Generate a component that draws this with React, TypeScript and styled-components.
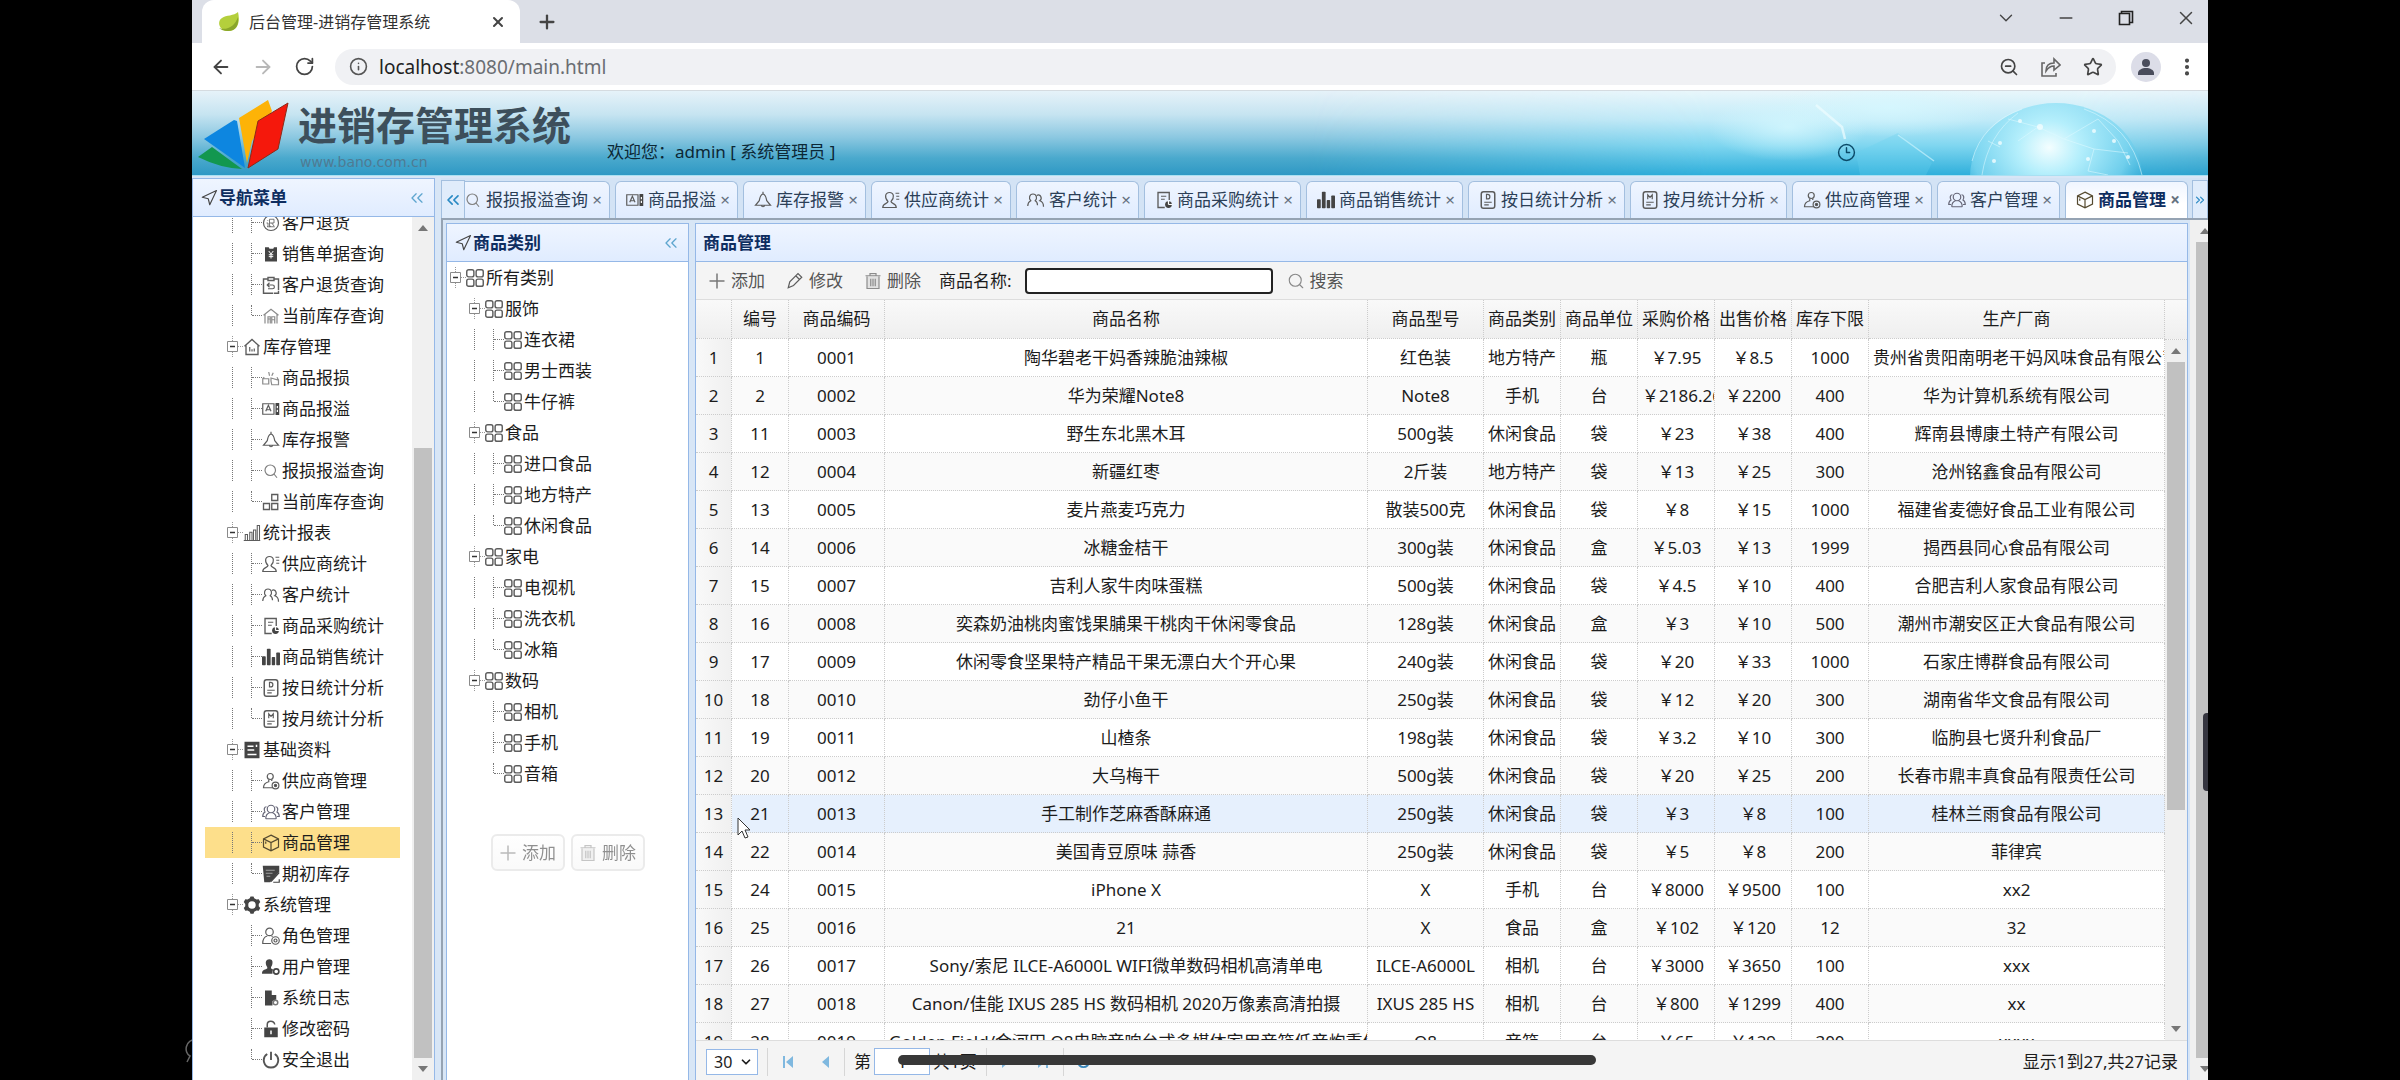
import React from "react";
import styled, { createGlobalStyle, css } from "styled-components";
import {
  ArrowLeft,
  ArrowRight,
  ChevronDown,
  ChevronsLeft,
  ChevronsRight,
  Clock3,
  Info,
  Minus,
  MoreVertical,
  Navigation,
  Plus,
  RotateCw,
  Search,
  Star,
  X,
  ZoomOut,
} from "lucide-react";

const BORDER = "#95b8e7";
const PANEL_TEXT = "#0e2d5f";
const EDGE = "#95a3b3";

const GlobalStyle = createGlobalStyle`
  * { box-sizing: border-box; }
  body {
    margin: 0;
    background: #000;
    color: #1c1c1c;
    font-family: "Noto Sans", "Noto Sans CJK SC", sans-serif;
    font-size: 17px;
    line-height: 24px;
  }
  button, input, select { font: inherit; color: inherit; }
  a { color: inherit; text-decoration: none; }
`;

/* ---------- icons ---------- */

type IconName =
  | "refund" | "receipt" | "clipboard" | "houseLight" | "house" | "damage" | "overflow"
  | "bell" | "search" | "squares" | "chart" | "supplier" | "people" | "docPie" | "bars"
  | "day" | "month" | "archive" | "supplierCog" | "group" | "cube" | "docPen" | "gear"
  | "role" | "userCog" | "log" | "lock" | "power" | "grid" | "plus" | "pencil" | "trash";

const S = { fill: "none", stroke: "#5c5c5c", strokeWidth: 1.6 } as const;
const F = { fill: "#444" } as const;

const drawings: Record<IconName, React.ReactNode> = {
  refund: (
    <g {...S}>
      <circle cx="12" cy="12" r="10" />
      <path d="M10 7h6v5h-6zM10 12v5l2-1M13 12l3 4M7 8l1 1M6 12h2v4l-1 1h10" strokeWidth="1.1" />
    </g>
  ),
  receipt: (
    <g>
      <path {...F} d="M4 3h5l1 2h5l1-2h4v19H4z" />
      <path d="M9 8l3 4 3-4M12 12v6M9 13h6M9 15.500h6" fill="none" stroke="#fff" strokeWidth="1.3" />
    </g>
  ),
  clipboard: (
    <g {...S}>
      <path d="M8 4H2v19h13M16 4h6v15M8 2h8v4H8zM16 23h6v-3" strokeWidth="1.9" />
      <path d="M10 9l-3 3 3 3M7 12h7a2.500 2.500 0 0 1 0 5h-6" />
    </g>
  ),
  houseLight: (
    <g {...S} stroke="#8a8a8a">
      <path d="M2 11L12 3l10 8M4 10v12M20 10v12" />
      <path d="M8 22v-9h3v9M13 22v-9h4v9M8 16h3M13 17h4" />
    </g>
  ),
  house: (
    <g {...S}>
      <path d="M2 11L12 2l10 9M4 10v12h16V10" strokeWidth="1.8" />
      <path d="M9 18v-6M12 18v-3M15 18v-4" />
    </g>
  ),
  damage: (
    <g {...S} stroke="#8a8a8a">
      <path d="M1 13h8v7H1zM12 12l10 3v6h-9l-1-5zM9 4l1 5M15 5l-2 4M1 13l2-2M22 15l-2-4" />
    </g>
  ),
  overflow: (
    <g {...S}>
      <path d="M1 5h15v14H1z" />
      <path d="M5 15l3.500-8 3.500 8M6 13h5" />
      <path {...F} stroke="none" d="M18 4h5v16h-5z" />
      <path d="M20.500 8v3M20.500 13v3" stroke="#fff" />
    </g>
  ),
  bell: (
    <g {...S}>
      <path d="M12 1v3M12 4c-4 1-4 5-5 9L2 19h20l-5-6c-1-4-1-8-5-9zM10 19a2 2 0 0 0 4 0" />
    </g>
  ),
  search: (
    <g {...S} stroke="#808080">
      <circle cx="11" cy="11" r="7" />
      <path d="M16 16l4 5" />
    </g>
  ),
  squares: (
    <g {...S} strokeWidth="1.8">
      <path d="M13 2h8v8h-8zM2 14h8v8H2zM13 14h8v8h-8z" />
    </g>
  ),
  chart: (
    <g {...S} strokeWidth="1.4">
      <path d="M1 22h22M3 22v-8h3v8M9 22V11h3v11M14 22V8h3v14M19 22V2h3v20" />
    </g>
  ),
  supplier: (
    <g {...S}>
      <path d="M8 14C3 9 4 2 10 2s7 7 2 12c0 3 7 2 7 8H1c0-6 7-5 7-8z" />
      <path d="M18 3h5M19 7h4M19 11h4" />
    </g>
  ),
  people: (
    <g {...S}>
      <path d="M1 20c0-5 2-6 4-7-3-3-2-9 3-9s6 6 3 9c2 1 3 2 3 6" />
      <path d="M13 6c5-3 8 4 4 7 4 1 5 4 5 8" />
    </g>
  ),
  docPie: (
    <g {...S}>
      <path d="M13 22H4V2h15v10" strokeWidth="1.8" />
      <path d="M8 7h7M8 11h5" />
      <circle {...F} stroke="none" cx="18" cy="18" r="4.500" />
      <path d="M18 18v-5M18 18h5" stroke="#fff" />
    </g>
  ),
  bars: (
    <g {...F}>
      <rect x="0" y="11" width="5" height="12" rx="1" />
      <rect x="6.500" y="1" width="5" height="22" rx="1" />
      <rect x="13" y="12" width="4.500" height="11" rx="1" />
      <rect x="19" y="6" width="5" height="17" rx="1" />
    </g>
  ),
  day: (
    <g {...S}>
      <rect x="3" y="1" width="18" height="22" rx="3" strokeWidth="2" />
      <path d="M10 4.500v6h1.500a3 3 0 0 0 0-6zM7 15h10M7 18.500h6" />
    </g>
  ),
  month: (
    <g {...S}>
      <rect x="3" y="1" width="18" height="22" rx="3" strokeWidth="2" />
      <path d="M9 11V5l3 3.500L15 5v6M7 15h10M7 18.500h6" />
    </g>
  ),
  archive: (
    <g>
      <path {...F} d="M2 1h20v22H2z" />
      <path d="M6 7h8M6 12h9M6 18h12M18 5v3" stroke="#fff" strokeWidth="2" />
    </g>
  ),
  supplierCog: (
    <g {...S}>
      <circle cx="11" cy="6" r="4" />
      <path d="M9 10v3c-4 1-7 3-7 8h12M13 10v2" />
      <circle cx="18" cy="18" r="4.500" />
      <circle cx="18" cy="18" r="1.500" fill="#444" />
    </g>
  ),
  group: (
    <g {...S} stroke="#667">
      <circle cx="12" cy="8" r="5" />
      <path d="M5 21c0-5 2-7 5-8M19 21c0-5-2-7-5-8M5 21h14M6 5C3 5 2 9 4 12c-2 1-3 3-3 6h3M18 5c3 0 4 4 2 7 2 1 3 3 3 6h-3" />
    </g>
  ),
  cube: (
    <g {...S} stroke="#554a30">
      <path d="M12 1.500l10 5v11l-10 5-10-5v-11zM2 6.500l10 5 10-5M12 11.500v11M5 10v3" />
    </g>
  ),
  docPen: (
    <g>
      <path {...F} d="M1 1h22v8L11 23H3z" />
      <path d="M5 7h12M5 11h9M6 15h5" stroke="#aaa" strokeWidth="1.200" />
      <path d="M12 22L23 10M15 23h8v-4" fill="none" stroke="#444" strokeWidth="1.600" />
    </g>
  ),
  gear: (
    <path
      {...F}
      fillRule="evenodd"
      d="M9 3l1-2.500h4L15 3l3 1.700 3-.5 2 3.800-2 2.500v3l2 2.500-2 3.800-3-.5-3 1.700-1 2.500h-4L9 21l-3-1.700-3 .5L1 16l2-2.500v-3L1 8l2-3.800 3 .5zM12 7a5 5 0 1 0 0 10 5 5 0 0 0 0-10z"
    />
  ),
  role: (
    <g {...S}>
      <circle cx="10" cy="6.500" r="5" />
      <path d="M7 12c-4 1-6 4-6 10h11M13 12l1 1" />
      <circle cx="18" cy="18" r="5" />
      <circle cx="18" cy="18" r="2" />
    </g>
  ),
  userCog: (
    <g>
      <path {...F} d="M5 6c0-6 10-6 9 0 0 3-1 5-2 6v2c3 1 3 1 2 4v3H0c0-5 3-5 7-7v-2C6 11 5 9 5 6z" />
      <circle cx="19" cy="18" r="3.500" fill="none" stroke="#444" strokeWidth="2.200" />
    </g>
  ),
  log: (
    <g>
      <path {...F} d="M4 2h9v6h6v6l-5 2v6H4z" />
      <circle cx="18" cy="18" r="3" fill="none" stroke="#777" strokeWidth="2" />
    </g>
  ),
  lock: (
    <g>
      <path {...F} fillRule="evenodd" d="M3 10h18v13H3zM11 14v5h2v-5z" />
      <path d="M7 10V6c0-6 9-6 10 0" fill="none" stroke="#555" strokeWidth="2" />
    </g>
  ),
  power: (
    <path d="M7 4C-1 9 2 22 12 22S25 9 17 4M12 1v11" fill="none" stroke="#555" strokeWidth="2.500" />
  ),
  grid: (
    <g {...S} strokeWidth="1.900">
      <rect x="1" y="1" width="9.500" height="9.500" rx="2.500" />
      <rect x="13.500" y="1" width="9.500" height="9.500" rx="2.500" />
      <rect x="1" y="13.500" width="9.500" height="9.500" rx="2.500" />
      <rect x="13.500" y="13.500" width="9.500" height="9.500" rx="2.500" />
    </g>
  ),
  plus: <path d="M12 2v20M2 12h20" fill="none" stroke="#777" strokeWidth="2" />,
  pencil: (
    <g {...S}>
      <path d="M3 21l2-8L16 2l5 5L10 18zM13 5l5 5" />
    </g>
  ),
  trash: (
    <g {...S} stroke="#8c8c8c">
      <path d="M2 5h20M8 5V2h8v3M4 6v16h16V6M9 9v10M12 9v10M15 9v10" fill="#e2e2e2" />
    </g>
  ),
};

const Svg = styled.svg`
  flex: none;
  display: block;
`;

function Icon({ name, size = 18 }: { name: IconName; size?: number }) {
  return (
    <Svg width={size} height={size} viewBox="0 0 24 24" aria-hidden="true">
      {drawings[name]}
    </Svg>
  );
}

/* ---------- frame ---------- */

const Stage = styled.div`
  position: relative;
  height: 100vh;
  padding: 0 8%;
  background: #000;
  overflow: hidden;
`;

const EdgeGlyph = styled.svg`
  position: absolute;
  left: calc(8% - 7px);
  bottom: 16px;
`;

const BrowserWindow = styled.div`
  position: relative;
  display: flex;
  flex-direction: column;
  height: 100%;
  background: #d8e6f6;
  overflow: hidden;
`;

const TabStrip = styled.div`
  display: flex;
  justify-content: space-between;
  height: 43px;
  flex: none;
  padding-left: 10px;
  background: #dcdfe7;
`;

const StripGroup = styled.div`
  display: flex;
  align-items: center;
  gap: 16px;
`;

const BrowserTab = styled.div`
  display: flex;
  align-items: center;
  gap: 9px;
  width: 318px;
  height: 100%;
  padding: 0 14px 0 15px;
  border-radius: 12px 12px 0 0;
  background: #fff;
  font-size: 16px;
  color: #333;
`;

const TabCaption = styled.span`
  flex: 1;
`;

const IconButton = styled.button`
  display: flex;
  align-items: center;
  justify-content: center;
  padding: 0;
  border: 0;
  background: none;
  color: #444;
`;

const WindowControls = styled.div`
  display: flex;
  margin-right: -8px;
  padding-bottom: 8px;

  button { width: 60px; }
`;

const AddressRow = styled.div`
  display: flex;
  align-items: center;
  gap: 20px;
  height: 48px;
  flex: none;
  padding: 0 10px 0 18px;
  border-bottom: 1px solid #d5dbe0;
  background: #fff;
`;

const Omnibox = styled.div`
  display: flex;
  align-items: center;
  flex: 1;
  gap: 11px;
  height: 36px;
  padding: 0 13px 0 14px;
  border-radius: 18px;
  background: #f0f1f4;
  color: #555;
`;

const UrlText = styled.span`
  flex: 1;
  font-size: 19px;
  color: #6a6d72;

  b { font-weight: 400; color: #222; }
`;

const OmniActions = styled.div`
  display: flex;
  gap: 22px;
`;

const Avatar = styled.button`
  display: grid;
  place-items: center;
  width: 30px;
  height: 30px;
  margin: 0 -5px;
  padding: 0;
  border: 0;
  border-radius: 50%;
  background: #dcdde8;
`;

/* ---------- banner ---------- */

const Banner = styled.header`
  position: relative;
  display: flex;
  align-items: flex-start;
  height: 84px;
  flex: none;
  padding-left: 5px;
  background: linear-gradient(#e6f2f9 0%, #c6e4f1 28%, #8cc8e1 55%, #4aa9cd 80%, #2e98c4 100%);
`;

const BannerArt = styled.svg`
  position: absolute;
  top: 0;
  right: 0;
  height: 84px;
  width: 900px;
`;

const LogoMark = styled.svg`
  margin-top: 7px;
`;

const BrandText = styled.div`
  margin-left: 9px;
  padding-top: 14px;
`;

const BrandName = styled.h1`
  margin: 0;
  font-size: 39px;
  line-height: 40px;
  font-weight: 700;
  color: #3d4f5b;
`;

const BrandUrl = styled.div`
  padding: 7px 0 0 2px;
  font-family: "DejaVu Sans", sans-serif;
  font-size: 14px;
  line-height: 20px;
  color: #4f7b93;
`;

const Welcome = styled.div`
  margin: 49px 0 0 36px;
  color: #0c2836;
`;

const ClockIcon = styled(Clock3)`
  position: absolute;
  right: 352px;
  top: 52px;
  color: #0b4a68;
`;

/* ---------- panels ---------- */

const Workspace = styled.div`
  display: grid;
  grid-template-columns: 243px minmax(0, 1fr);
  gap: 6px;
  flex: 1;
  min-height: 0;
  padding-top: 2px;
  border-top: 2px solid #a9e0f2;
  margin-top: -1px;
`;

const Panel = styled.section`
  display: flex;
  flex-direction: column;
  min-height: 0;
  min-width: 0;
  border: 1px solid ${BORDER};
  border-bottom: 0;
  background: #fff;
`;

const PanelHeader = styled.header`
  display: flex;
  align-items: center;
  gap: 1px;
  height: 38px;
  flex: none;
  padding: 0 7px;
  border-bottom: 1px solid ${BORDER};
  background: linear-gradient(#eff5ff 0%, #e0ecff 100%);
  color: ${PANEL_TEXT};

  h2 {
    flex: 1;
    margin: 0;
    font-size: 17px;
    font-weight: 700;
  }
  button { color: #5fa6cf; }
`;

const NavBody = styled.div`
  display: flex;
  flex: 1;
  min-height: 0;
`;

const NavScroll = styled.div`
  display: flex;
  flex-direction: column;
  justify-content: flex-end;
  flex: 1;
  min-height: 0;
  padding: 0 12px 5px;
  overflow: hidden;
`;

const ScrollTrack = styled.div`
  display: flex;
  flex-direction: column;
  width: 22px;
  flex: none;
  min-height: 0;
  padding: 0 2px;
  background: #f0f0f0;
`;

const ScrollThumb = styled.div<{ $before: number; $size: number; $after: number }>`
  display: flex;
  flex-direction: column;
  flex: 1;
  min-height: 0;

  &::before { content: ""; flex: ${(p) => p.$before} 0 0; }
  span { flex: ${(p) => p.$size} 0 0; background: #c1c1c1; }
  &::after { content: ""; flex: ${(p) => p.$after} 0 0; }
`;

const Arrow = styled.button<{ $down?: boolean }>`
  display: grid;
  place-items: center;
  height: 22px;
  flex: none;
  padding: 0;
  border: 0;
  background: none;

  &::before {
    content: "";
    border: 5px solid transparent;
    ${(p) => (p.$down ? css`border-top: 6px solid #777; border-bottom: 0;` : css`border-bottom: 6px solid #777; border-top: 0;`)}
  }
`;

function Scrollbar({ before, size, after }: { before: number; size: number; after: number }) {
  return (
    <ScrollTrack>
      <Arrow aria-label="向上滚动" />
      <ScrollThumb $before={before} $size={size} $after={after}>
        <span />
      </ScrollThumb>
      <Arrow $down aria-label="向下滚动" />
    </ScrollTrack>
  );
}

/* ---------- trees ---------- */

const TreeRow = styled.a<{ $active?: boolean }>`
  display: flex;
  align-items: center;
  height: 31px;
  flex: none;
  white-space: nowrap;
  background: ${(p) => (p.$active ? "#fddf8b" : "transparent")};

  svg + span { margin-left: 2px; }
`;

const Guide = styled.i<{ $kind: "blank" | "line" | "join" | "end" }>`
  display: block;
  position: relative;
  width: 19px;
  height: 21px;
  flex: none;

  ${(p) =>
    p.$kind !== "blank" &&
    css`
      &::before {
        content: "";
        position: absolute;
        left: 8px;
        top: 0;
        height: ${p.$kind === "end" ? "10px" : "21px"};
        border-left: 1px dotted #777;
      }
    `}
  ${(p) =>
    (p.$kind === "join" || p.$kind === "end") &&
    css`
      &::after {
        content: "";
        position: absolute;
        left: 9px;
        right: 0;
        top: 10px;
        border-top: 1px dotted #777;
      }
    `}
`;

function Expander() {
  return (
    <Svg width="19" height="21" viewBox="0 0 19 21" aria-hidden="true">
      <path d="M8.500 0v5M8.500 16v5M14 10.500h5" stroke="#999" strokeDasharray="1 1" />
      <path d="M3.500 5.500h10v10h-10z" fill="#fff" stroke="#8a8a8a" />
      <path d="M6 10.500h5" stroke="#333" strokeWidth="1.500" />
    </Svg>
  );
}

interface Node {
  label: string;
  icon: IconName;
  children?: Node[];
}

const leaf = (label: string, icon: IconName): Node => ({ label, icon });

const menu: Node[] = [
  {
    label: "库存管理",
    icon: "house",
    children: [
      leaf("商品报损", "damage"),
      leaf("商品报溢", "overflow"),
      leaf("库存报警", "bell"),
      leaf("报损报溢查询", "search"),
      leaf("当前库存查询", "squares"),
    ],
  },
  {
    label: "统计报表",
    icon: "chart",
    children: [
      leaf("供应商统计", "supplier"),
      leaf("客户统计", "people"),
      leaf("商品采购统计", "docPie"),
      leaf("商品销售统计", "bars"),
      leaf("按日统计分析", "day"),
      leaf("按月统计分析", "month"),
    ],
  },
  {
    label: "基础资料",
    icon: "archive",
    children: [
      leaf("供应商管理", "supplierCog"),
      leaf("客户管理", "group"),
      leaf("商品管理", "cube"),
      leaf("期初库存", "docPen"),
    ],
  },
  {
    label: "系统管理",
    icon: "gear",
    children: [
      leaf("角色管理", "role"),
      leaf("用户管理", "userCog"),
      leaf("系统日志", "log"),
      leaf("修改密码", "lock"),
      leaf("安全退出", "power"),
    ],
  },
];

const saleLeaves: Node[] = [
  leaf("客户退货", "refund"),
  leaf("销售单据查询", "receipt"),
  leaf("客户退货查询", "clipboard"),
  leaf("当前库存查询", "houseLight"),
];

const category = (label: string, names: string[]): Node => ({
  label,
  icon: "grid",
  children: names.map((n) => leaf(n, "grid")),
});

const categories: Node[] = [
  category("服饰", ["连衣裙", "男士西装", "牛仔裤"]),
  category("食品", ["进口食品", "地方特产", "休闲食品"]),
  category("家电", ["电视机", "洗衣机", "冰箱"]),
  category("数码", ["相机", "手机", "音箱"]),
];

function Leaves({ nodes, lastGroup, active }: { nodes: Node[]; lastGroup: boolean; active?: string }) {
  return (
    <>
      {nodes.map((node, i) => (
        <TreeRow key={node.label} href="#" $active={node.label === active}>
          <Guide $kind="blank" />
          <Guide $kind={lastGroup ? "blank" : "line"} />
          <Guide $kind={i === nodes.length - 1 ? "end" : "join"} />
          <Icon name={node.icon} />
          <span>{node.label}</span>
        </TreeRow>
      ))}
    </>
  );
}

function Groups({ nodes, active }: { nodes: Node[]; active?: string }) {
  return (
    <>
      {nodes.map((node, i) => (
        <React.Fragment key={node.label}>
          <TreeRow href="#">
            <Guide $kind="blank" />
            <Expander />
            <Icon name={node.icon} />
            <span>{node.label}</span>
          </TreeRow>
          <Leaves nodes={node.children ?? []} lastGroup={i === nodes.length - 1} active={active} />
        </React.Fragment>
      ))}
    </>
  );
}

/* ---------- work tabs ---------- */

const Center = styled.main`
  display: flex;
  flex-direction: column;
  min-width: 0;
  min-height: 0;
`;

const TabBar = styled.div`
  display: flex;
  align-items: stretch;
  height: 42px;
  flex: none;
  padding-top: 2px;
  border-bottom: 2px solid ${EDGE};
  background: #d3e3f5;
`;

const ScrollTabs = styled.button<{ $width: number }>`
  display: flex;
  align-items: center;
  justify-content: center;
  width: ${(p) => p.$width}px;
  flex: none;
  padding: 0;
  border: 1px solid #a3bfdf;
  border-width: 1px 1px 0;
  background: #e0ecfb;
  color: #2a8ac4;
  overflow: hidden;
`;

const TabViewport = styled.div`
  display: flex;
  justify-content: flex-end;
  gap: 5px;
  flex: 1;
  min-width: 0;
  margin-right: 4px;
  overflow: hidden;
`;

const WorkTab = styled.div<{ $active?: boolean }>`
  display: flex;
  align-items: center;
  gap: 4px;
  flex: none;
  margin-top: 1px;
  padding: 0 7px 0 10px;
  border: 1px solid #a3bfdf;
  border-bottom: 0;
  border-radius: 6px 6px 0 0;
  background: ${(p) => (p.$active ? "linear-gradient(#eff5ff, #fff 60%)" : "linear-gradient(#eff5ff, #e0ecff)")};
  color: ${(p) => (p.$active ? PANEL_TEXT : "#2c3f57")};
  font-weight: ${(p) => (p.$active ? 700 : 400)};
  white-space: nowrap;
`;

const CloseTab = styled.button`
  width: 10px;
  padding: 0;
  border: 0;
  background: none;
  color: #66727f;
  font-size: 17px;
  line-height: 20px;
`;

const workTabs: Node[] = [
  leaf("报损报溢查询", "search"),
  leaf("商品报溢", "overflow"),
  leaf("库存报警", "bell"),
  leaf("供应商统计", "supplier"),
  leaf("客户统计", "people"),
  leaf("商品采购统计", "docPie"),
  leaf("商品销售统计", "bars"),
  leaf("按日统计分析", "day"),
  leaf("按月统计分析", "month"),
  leaf("供应商管理", "supplierCog"),
  leaf("客户管理", "group"),
  leaf("商品管理", "cube"),
];

const TabContent = styled.div`
  display: flex;
  flex: 1;
  min-height: 0;
  border-left: 2px solid ${EDGE};
`;

const Split = styled.div`
  display: grid;
  grid-template-columns: 243px minmax(0, 1fr);
  gap: 6px;
  flex: 1;
  min-width: 0;
  min-height: 0;
  padding: 3px 2px 0 3px;
`;

const PageScroll = styled.div`
  width: 18px;
  flex: none;
  display: flex;
  overflow: hidden;
  padding-left: 4px;
  background: #f0f0f0;
`;

const CategoryActions = styled.div`
  display: flex;
  justify-content: center;
  gap: 6px;
  padding-top: 45px;
`;

const GhostButton = styled.button`
  display: flex;
  align-items: center;
  justify-content: center;
  gap: 5px;
  width: 74px;
  height: 37px;
  padding: 0;
  border: 2px solid #d8d8d8;
  border-radius: 6px;
  background: linear-gradient(#fff, #f6f6f6);
  color: #222;
  opacity: 0.5;
`;

/* ---------- product grid ---------- */

const Toolbar = styled.div`
  display: flex;
  align-items: center;
  height: 38px;
  flex: none;
  padding-left: 12px;
  border-bottom: 1px solid #ddd;
  background: #f4f4f4;

  label { margin: 0 13px 0 18px; }
`;

const ToolButton = styled.button`
  display: flex;
  align-items: center;
  gap: 5px;
  margin-right: 21px;
  padding: 0;
  border: 0;
  background: none;
  color: #555;
  &:nth-of-type(3) { margin-right: 0; }
`;

const NameInput = styled.input`
  width: 248px;
  height: 26px;
  margin-right: 14px;
  padding: 0 6px;
  border: 2px solid #222;
  border-radius: 4px;
  background: #fff;
`;

const GridArea = styled.div`
  display: flex;
  flex: 1;
  min-height: 0;
  overflow: hidden;
`;

const GridTable = styled.table`
  width: 100%;
  table-layout: fixed;
  border-collapse: separate;
  border-spacing: 0;
`;

const TableClip = styled.div`
  flex: 1;
  min-width: 0;
  overflow: hidden;
`;

const headFill = css`
  background: linear-gradient(#f9f9f9, #efefef);
`;

const HeadCell = styled.th`
  height: 39px;
  padding: 0;
  border: dotted #ccc;
  border-width: 0 1px 1px 0;
  ${headFill}
  font-weight: 400;
  white-space: nowrap;
`;

const Cell = styled.td`
  height: 38px;
  padding: 0;
  border: dotted #ccc;
  border-width: 0 1px 1px 0;
  text-align: center;
`;

const RowNumber = styled(Cell)`
  background: linear-gradient(90deg, #f9f9f9, #f0f0f0);
`;

const Row = styled.tr<{ $hover?: boolean }>`
  background: #fff;
  &:nth-child(even) { background: #fafafa; }
  && { ${(p) => p.$hover && "background: #e6f0fd;"} }
`;

const CellText = styled.div`
  padding: 0 4px;
  overflow: hidden;
  white-space: nowrap;
`;

const GridScroll = styled.div`
  display: flex;
  flex-direction: column;
  flex: none;
  min-height: 0;

  &::before {
    content: "";
    height: 39px;
    flex: none;
    border-bottom: 1px dotted #ccc;
    ${headFill}
  }
  > div { flex: 1; }
`;

const columns: { title: string; width?: number }[] = [
  { title: "", width: 36 },
  { title: "编号", width: 57 },
  { title: "商品编码", width: 96 },
  { title: "商品名称" },
  { title: "商品型号", width: 116 },
  { title: "商品类别", width: 77 },
  { title: "商品单位", width: 77 },
  { title: "采购价格", width: 77 },
  { title: "出售价格", width: 77 },
  { title: "库存下限", width: 77 },
  { title: "生产厂商", width: 296 },
];

const rows: string[][] = [
  ["1", "0001", "陶华碧老干妈香辣脆油辣椒", "红色装", "地方特产", "瓶", "￥7.95", "￥8.5", "1000", "贵州省贵阳南明老干妈风味食品有限公司"],
  ["2", "0002", "华为荣耀Note8", "Note8", "手机", "台", "￥2186.26", "￥2200", "400", "华为计算机系统有限公司"],
  ["11", "0003", "野生东北黑木耳", "500g装", "休闲食品", "袋", "￥23", "￥38", "400", "辉南县博康土特产有限公司"],
  ["12", "0004", "新疆红枣", "2斤装", "地方特产", "袋", "￥13", "￥25", "300", "沧州铭鑫食品有限公司"],
  ["13", "0005", "麦片燕麦巧克力", "散装500克", "休闲食品", "袋", "￥8", "￥15", "1000", "福建省麦德好食品工业有限公司"],
  ["14", "0006", "冰糖金桔干", "300g装", "休闲食品", "盒", "￥5.03", "￥13", "1999", "揭西县同心食品有限公司"],
  ["15", "0007", "吉利人家牛肉味蛋糕", "500g装", "休闲食品", "袋", "￥4.5", "￥10", "400", "合肥吉利人家食品有限公司"],
  ["16", "0008", "奕森奶油桃肉蜜饯果脯果干桃肉干休闲零食品", "128g装", "休闲食品", "盒", "￥3", "￥10", "500", "潮州市潮安区正大食品有限公司"],
  ["17", "0009", "休闲零食坚果特产精品干果无漂白大个开心果", "240g装", "休闲食品", "袋", "￥20", "￥33", "1000", "石家庄博群食品有限公司"],
  ["18", "0010", "劲仔小鱼干", "250g装", "休闲食品", "袋", "￥12", "￥20", "300", "湖南省华文食品有限公司"],
  ["19", "0011", "山楂条", "198g装", "休闲食品", "袋", "￥3.2", "￥10", "300", "临朐县七贤升利食品厂"],
  ["20", "0012", "大乌梅干", "500g装", "休闲食品", "袋", "￥20", "￥25", "200", "长春市鼎丰真食品有限责任公司"],
  ["21", "0013", "手工制作芝麻香酥麻通", "250g装", "休闲食品", "袋", "￥3", "￥8", "100", "桂林兰雨食品有限公司"],
  ["22", "0014", "美国青豆原味 蒜香", "250g装", "休闲食品", "袋", "￥5", "￥8", "200", "菲律宾"],
  ["24", "0015", "iPhone X", "X", "手机", "台", "￥8000", "￥9500", "100", "xx2"],
  ["25", "0016", "21", "X", "食品", "盒", "￥102", "￥120", "12", "32"],
  ["26", "0017", "Sony/索尼 ILCE-A6000L WIFI微单数码相机高清单电", "ILCE-A6000L", "相机", "台", "￥3000", "￥3650", "100", "xxx"],
  ["27", "0018", "Canon/佳能 IXUS 285 HS 数码相机 2020万像素高清拍摄", "IXUS 285 HS", "相机", "台", "￥800", "￥1299", "400", "xx"],
  ["28", "0019", "Golden Field/金河田 Q8电脑音响台式多媒体家用音箱低音炮重低音", "Q8", "音箱", "台", "￥65", "￥129", "300", "xxxx"],
];

const Pager = styled.footer`
  display: flex;
  align-items: center;
  height: 40px;
  flex: none;
  padding: 2px 9px 0 10px;
  border-top: 1px solid #ddd;
  background: #f4f4f4;
  white-space: nowrap;
`;

const PageSize = styled.label`
  display: flex;
  align-items: center;
  position: relative;
  margin-right: 8px;
  select {
    width: 52px;
    height: 26px;
    padding: 0 0 0 7px;
    border: 1px solid ${BORDER};
    border-radius: 0;
    background: #fff;
    appearance: none;
    font-size: 16px;
    line-height: 22px;
  }
  svg { position: absolute; right: 5px; }
`;

const Divider = styled.i`
  width: 1px;
  height: 28px;
  margin: 0 1px;
  background: #d6d6d6;
`;

const PagerButton = styled.button`
  display: flex;
  justify-content: center;
  width: 37px;
  padding: 0;
  border: 0;
  background: none;
`;

const PageField = styled.label`
  display: flex;
  align-items: center;
  gap: 3px;
  margin: 0 8px;
  input {
    width: 56px;
    height: 27px;
    padding: 0;
    border: 1px solid ${BORDER};
    background: #fff;
    text-align: center;
  }
`;

const Summary = styled.span`
  margin-left: auto;
`;

/* ---------- things lying over the page ---------- */

const HomeBar = styled.div`
  position: absolute;
  left: 35%;
  bottom: 15px;
  width: 698px;
  height: 10px;
  border-radius: 5px;
  background: #383838;
`;

const EdgeHandle = styled.div`
  position: absolute;
  right: 0;
  top: 66%;
  width: 5px;
  height: 78px;
  border-radius: 4px 0 0 4px;
  background: #35353f;
`;

const Pointer = styled.svg`
  position: absolute;
  left: 545px;
  top: 817px;
`;

function PagerGlyph({ d }: { d: string }) {
  return (
    <svg width="14" height="14" viewBox="0 0 14 14" aria-hidden="true">
      <path d={d} fill="#7fb8df" />
    </svg>
  );
}

function NavPanel() {
  return (
    <Panel>
      <PanelHeader>
        <Navigation size={18} strokeWidth={1.5} color="#444" />
        <h2>导航菜单</h2>
        <IconButton aria-label="折叠">
          <ChevronsLeft size={20} strokeWidth={1.6} />
        </IconButton>
      </PanelHeader>
      <NavBody>
        <NavScroll as="nav">
          <Leaves nodes={saleLeaves} lastGroup={false} />
          <Groups nodes={menu} active="商品管理" />
        </NavScroll>
        <Scrollbar before={210} size={613} after={0} />
      </NavBody>
    </Panel>
  );
}

function CategoryPanel() {
  return (
    <Panel>
      <PanelHeader>
        <Navigation size={18} strokeWidth={1.5} color="#444" />
        <h2>商品类别</h2>
        <IconButton aria-label="折叠">
          <ChevronsLeft size={20} strokeWidth={1.6} />
        </IconButton>
      </PanelHeader>
      <TreeRow href="#">
        <Expander />
        <Icon name="grid" />
        <span>所有类别</span>
      </TreeRow>
      <Groups nodes={categories} />
      <CategoryActions>
        <GhostButton disabled>
          <Icon name="plus" />
          添加
        </GhostButton>
        <GhostButton disabled>
          <Icon name="trash" />
          删除
        </GhostButton>
      </CategoryActions>
    </Panel>
  );
}

function ProductPanel() {
  return (
    <Panel>
      <PanelHeader>
        <h2>商品管理</h2>
      </PanelHeader>
      <Toolbar>
        <ToolButton>
          <Icon name="plus" />
          添加
        </ToolButton>
        <ToolButton>
          <Icon name="pencil" />
          修改
        </ToolButton>
        <ToolButton>
          <Icon name="trash" />
          删除
        </ToolButton>
        <label htmlFor="product-name">商品名称:</label>
        <NameInput id="product-name" type="text" />
        <ToolButton>
          <Search size={18} strokeWidth={1.5} color="#888" />
          搜索
        </ToolButton>
      </Toolbar>
      <GridArea>
        <TableClip>
          <GridTable>
            <colgroup>
              {columns.map((c, i) => (
                <col key={i} width={c.width} />
              ))}
            </colgroup>
            <thead>
              <tr>
                {columns.map((c, i) => (
                  <HeadCell key={i}>{c.title}</HeadCell>
                ))}
              </tr>
            </thead>
            <tbody>
              {rows.map((cells, i) => (
                <Row key={cells[1]} $hover={cells[1] === "0013"}>
                  <RowNumber>{i + 1}</RowNumber>
                  {cells.map((text, j) => (
                    <Cell key={j}>
                      <CellText>{text}</CellText>
                    </Cell>
                  ))}
                </Row>
              ))}
            </tbody>
          </GridTable>
        </TableClip>
        <GridScroll>
          <Scrollbar before={0} size={448} after={208} />
        </GridScroll>
      </GridArea>
      <Pager>
        <PageSize>
          <select aria-label="每页条数" defaultValue="30">
            <option>30</option>
          </select>
          <ChevronDown size={14} strokeWidth={3} />
        </PageSize>
        <Divider />
        <PagerButton aria-label="首页">
          <PagerGlyph d="M2 1h2v12H2zM12 1v12L5 7z" />
        </PagerButton>
        <PagerButton aria-label="上一页">
          <PagerGlyph d="M11 1v12L4 7z" />
        </PagerButton>
        <Divider />
        <PageField>
          第
          <input type="text" defaultValue="1" />
          共1页
        </PageField>
        <Divider />
        <PagerButton aria-label="下一页">
          <PagerGlyph d="M3 1v12l7-6z" />
        </PagerButton>
        <PagerButton aria-label="末页">
          <PagerGlyph d="M10 1h2v12h-2zM2 1v12l7-6z" />
        </PagerButton>
        <Divider />
        <PagerButton aria-label="刷新">
          <RotateCw size={15} strokeWidth={3} color="#3b87ba" />
        </PagerButton>
        <Summary>显示1到27,共27记录</Summary>
      </Pager>
    </Panel>
  );
}

function BannerGlobe() {
  return (
    <BannerArt viewBox="0 0 900 84" preserveAspectRatio="xMaxYMin slice" aria-hidden="true">
      <defs>
        <linearGradient id="sky" x1="0" y1="0" x2="0" y2="1">
          <stop offset="0" stopColor="#e8f6fb" />
          <stop offset="0.35" stopColor="#bfeaf8" />
          <stop offset="0.65" stopColor="#7fd6f0" />
          <stop offset="1" stopColor="#2fafdb" />
        </linearGradient>
        <linearGradient id="fade" x1="0" y1="0" x2="1" y2="0">
          <stop offset="0" stopColor="#000" />
          <stop offset="0.45" stopColor="#fff" />
          <stop offset="0.85" stopColor="#fff" />
          <stop offset="1" stopColor="#666" />
        </linearGradient>
        <mask id="soft">
          <rect width="900" height="84" fill="url(#fade)" />
        </mask>
        <radialGradient id="globe" cx="0.46" cy="0.3" r="0.6">
          <stop offset="0" stopColor="#f4feff" />
          <stop offset="0.3" stopColor="#b5effc" />
          <stop offset="0.75" stopColor="#7ad5f0" stopOpacity="0.8" />
          <stop offset="1" stopColor="#3fb4dd" stopOpacity="0.3" />
        </radialGradient>
        <radialGradient id="haze">
          <stop offset="0" stopColor="#d6f8ff" stopOpacity="0.8" />
          <stop offset="1" stopColor="#d6f8ff" stopOpacity="0" />
        </radialGradient>
      </defs>
      <g mask="url(#soft)">
        <rect width="900" height="84" fill="url(#sky)" />
        <ellipse cx="480" cy="36" rx="80" ry="34" fill="url(#haze)" />
        <ellipse cx="580" cy="16" rx="110" ry="30" fill="url(#haze)" />
        <path d="M508 14l26 22 3 12" fill="none" stroke="#eefcff" strokeWidth="2.500" opacity="0.7" />
        <path d="M548 62l42-20 34 30-6 12h-66z" fill="#66cfee" opacity="0.3" />
        <path d="M590 44l36 26" stroke="#c9f3fd" strokeWidth="1.500" opacity="0.7" />
      </g>
      <ellipse cx="748" cy="86" rx="86" ry="74" fill="url(#globe)" />
      <g fill="none" stroke="#dffaff" strokeWidth="1" opacity="0.55">
        <path d="M664 70q10-38 50-52M674 84q6-40 36-62M834 84q-12-50-58-66M700 28l30 8 26 12 34-20M790 28l20 22 12 24M756 48l30 10 34 4M786 58l-6 22 20 4M680 50l12 6M730 36l-20 14" />
      </g>
      <g fill="#f4feff" opacity="0.8">
        <circle cx="692" cy="52" r="2" />
        <circle cx="712" cy="30" r="2" />
        <circle cx="732" cy="36" r="3" />
        <circle cx="786" cy="40" r="2" />
        <circle cx="806" cy="50" r="2" />
        <circle cx="820" cy="66" r="2" />
        <circle cx="780" cy="68" r="2" />
        <circle cx="686" cy="70" r="2" />
      </g>
    </BannerArt>
  );
}

export default function App() {
  return (
    <Stage>
      <GlobalStyle />
      <EdgeGlyph width="22" height="26" viewBox="0 0 22 26" aria-hidden="true">
        <path d="M12 1C-1 2-1 15 5 18l-3 6" fill="none" stroke="#666" strokeWidth="1.500" />
      </EdgeGlyph>
      <BrowserWindow>
        <TabStrip>
          <StripGroup>
            <BrowserTab>
              <Svg width="23" height="22" viewBox="0 0 23 22" aria-hidden="true">
                <path d="M21 1c2 8 1 19-10 19-8 0-12-9-6-13C9 4 17 5 21 1z" fill="#b4cf3c" />
                <path d="M2 17c8 3 16-2 19-11 1 8-2 14-10 14-4 0-7-1-9-3z" fill="#8aa62a" />
              </Svg>
              <TabCaption>后台管理-进销存管理系统</TabCaption>
              <IconButton aria-label="关闭标签页">
                <X size={16} strokeWidth={3} />
              </IconButton>
            </BrowserTab>
            <IconButton aria-label="新标签页">
              <Plus size={22} strokeWidth={2.5} />
            </IconButton>
          </StripGroup>
          <WindowControls>
            <IconButton aria-label="搜索标签页">
              <ChevronDown size={22} strokeWidth={1.5} />
            </IconButton>
            <IconButton aria-label="最小化">
              <Minus size={20} strokeWidth={1.8} />
            </IconButton>
            <IconButton aria-label="还原">
              <svg width="16" height="16" viewBox="0 0 16 16" aria-hidden="true">
                <path d="M1.500 3.500h10v11h-10zM3.500 3V1.500h11v11H12" fill="none" stroke="#222" strokeWidth="1.600" />
              </svg>
            </IconButton>
            <IconButton aria-label="关闭">
              <X size={22} strokeWidth={1.6} />
            </IconButton>
          </WindowControls>
        </TabStrip>
        <AddressRow>
          <IconButton aria-label="后退">
            <ArrowLeft size={22} />
          </IconButton>
          <IconButton aria-label="前进">
            <ArrowRight size={22} color="#b8b8b8" />
          </IconButton>
          <IconButton aria-label="刷新">
            <RotateCw size={21} />
          </IconButton>
          <Omnibox>
            <Info size={19} />
            <UrlText>
              <b>localhost</b>:8080/main.html
            </UrlText>
            <OmniActions>
              <IconButton aria-label="缩放">
                <ZoomOut size={20} />
              </IconButton>
              <IconButton aria-label="分享">
                <svg width="20" height="20" viewBox="0 0 20 20" aria-hidden="true">
                  <path d="M4 6H1v13h14v-3M5 14c0-6 3-8 8-8V2l6 6-6 5V9c-4 0-6 2-8 5z" fill="none" stroke="#666" strokeWidth="1.600" />
                </svg>
              </IconButton>
              <IconButton aria-label="收藏">
                <Star size={20} />
              </IconButton>
            </OmniActions>
          </Omnibox>
          <Avatar aria-label="个人资料">
            <svg width="18" height="18" viewBox="0 0 18 18" aria-hidden="true">
              <circle cx="9" cy="5" r="4" fill="#4a4d5c" />
              <path d="M1 17v-2c0-3 4-5 8-5s8 2 8 5v2z" fill="#4a4d5c" />
            </svg>
          </Avatar>
          <IconButton aria-label="菜单">
            <MoreVertical size={22} strokeWidth={2.5} />
          </IconButton>
        </AddressRow>
        <Banner>
          <BannerGlobe />
          <LogoMark width="92" height="72" viewBox="0 0 92 72" aria-hidden="true">
            <path d="M1 59l14-10 30 22q-22-1-44-12z" fill="#12974f" />
            <path d="M7 41L37 22l3 1 8 47z" fill="#0d86e0" />
            <path d="M42 20L71 2l4 11-20 30-5 22z" fill="#fdb307" />
            <path d="M91 5L81 51 51 70l10-47z" fill="#f5180c" stroke="#8c2a18" strokeWidth="1" />
          </LogoMark>
          <BrandText>
            <BrandName>进销存管理系统</BrandName>
            <BrandUrl>www.bano.com.cn</BrandUrl>
          </BrandText>
          <Welcome>欢迎您：admin [ 系统管理员 ]</Welcome>
          <ClockIcon size={19} strokeWidth={1.8} />
        </Banner>
        <Workspace>
          <NavPanel />
          <Center>
            <TabBar>
              <ScrollTabs $width={24} aria-label="向左滚动">
                <ChevronsLeft size={20} />
              </ScrollTabs>
              <TabViewport>
                {workTabs.map((tab, i) => (
                  <WorkTab key={tab.label} $active={i === workTabs.length - 1}>
                    <Icon name={tab.icon} />
                    <span>{tab.label}</span>
                    <CloseTab aria-label="关闭">×</CloseTab>
                  </WorkTab>
                ))}
              </TabViewport>
              <ScrollTabs $width={16} aria-label="向右滚动">
                <ChevronsRight size={20} />
              </ScrollTabs>
            </TabBar>
            <TabContent>
              <Split>
                <CategoryPanel />
                <ProductPanel />
              </Split>
              <PageScroll>
                <Scrollbar before={0} size={830} after={0} />
              </PageScroll>
            </TabContent>
          </Center>
        </Workspace>
        <EdgeHandle />
        <Pointer width="14" height="22" viewBox="0 0 14 22" aria-hidden="true">
          <path d="M1 1v17l4-4 3 7 3-1-3-7h5z" fill="#fff" stroke="#333" />
        </Pointer>
        <HomeBar />
      </BrowserWindow>
    </Stage>
  );
}
